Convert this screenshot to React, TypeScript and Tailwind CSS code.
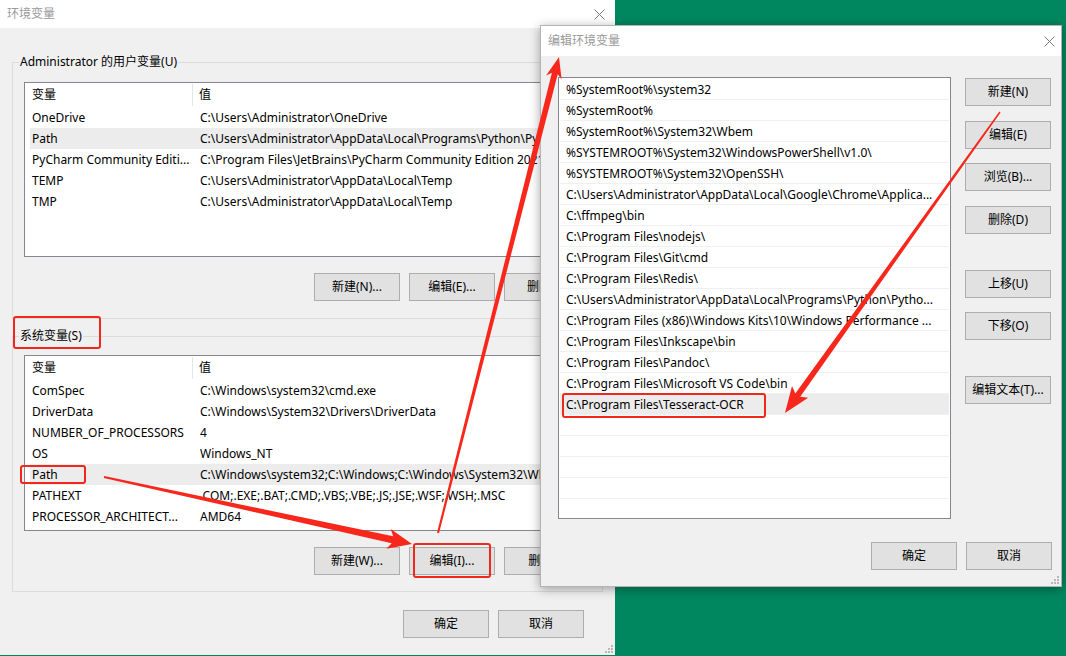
import React from "react";

// 用户变量 / 系统变量 rows
const userVars = [
  ["OneDrive", "C:\\Users\\Administrator\\OneDrive"],
  ["Path", "C:\\Users\\Administrator\\AppData\\Local\\Programs\\Python\\Python39\\"],
  ["PyCharm Community Editi...", "C:\\Program Files\\JetBrains\\PyCharm Community Edition 2021.1"],
  ["TEMP", "C:\\Users\\Administrator\\AppData\\Local\\Temp"],
  ["TMP", "C:\\Users\\Administrator\\AppData\\Local\\Temp"],
];

const sysVars = [
  ["ComSpec", "C:\\Windows\\system32\\cmd.exe"],
  ["DriverData", "C:\\Windows\\System32\\Drivers\\DriverData"],
  ["NUMBER_OF_PROCESSORS", "4"],
  ["OS", "Windows_NT"],
  ["Path", "C:\\Windows\\system32;C:\\Windows;C:\\Windows\\System32\\Wbem"],
  ["PATHEXT", ".COM;.EXE;.BAT;.CMD;.VBS;.VBE;.JS;.JSE;.WSF;.WSH;.MSC"],
  ["PROCESSOR_ARCHITECT...", "AMD64"],
];

const pathItems = [
  "%SystemRoot%\\system32",
  "%SystemRoot%",
  "%SystemRoot%\\System32\\Wbem",
  "%SYSTEMROOT%\\System32\\WindowsPowerShell\\v1.0\\",
  "%SYSTEMROOT%\\System32\\OpenSSH\\",
  "C:\\Users\\Administrator\\AppData\\Local\\Google\\Chrome\\Applica...",
  "C:\\ffmpeg\\bin",
  "C:\\Program Files\\nodejs\\",
  "C:\\Program Files\\Git\\cmd",
  "C:\\Program Files\\Redis\\",
  "C:\\Users\\Administrator\\AppData\\Local\\Programs\\Python\\Pytho...",
  "C:\\Program Files (x86)\\Windows Kits\\10\\Windows Performance ...",
  "C:\\Program Files\\Inkscape\\bin",
  "C:\\Program Files\\Pandoc\\",
  "C:\\Program Files\\Microsoft VS Code\\bin",
  "C:\\Program Files\\Tesseract-OCR",
  "",
  "",
  "",
  "",
  "",
];

function CloseX() {
  return (
    <svg width="11" height="11" viewBox="0 0 11 11">
      <path d="M0.5 0.5L10.5 10.5M10.5 0.5L0.5 10.5" stroke="#7a7a7a" strokeWidth="1" />
    </svg>
  );
}

function Grip() {
  return (
    <svg width="8" height="8" viewBox="0 0 8 8">
      <rect x="6" y="0" width="2" height="2" fill="#b8b8b8" />
      <rect x="3" y="3" width="2" height="2" fill="#b8b8b8" />
      <rect x="6" y="3" width="2" height="2" fill="#b8b8b8" />
      <rect x="0" y="6" width="2" height="2" fill="#b8b8b8" />
      <rect x="3" y="6" width="2" height="2" fill="#b8b8b8" />
      <rect x="6" y="6" width="2" height="2" fill="#b8b8b8" />
    </svg>
  );
}

function Btn({ children, className = "" }: { children: React.ReactNode; className?: string }) {
  return (
    <div
      className={`w-[86px] h-[28px] shrink-0 flex items-center justify-center bg-[#e1e1e1] border border-[#adadad] text-black whitespace-nowrap ${className}`}
    >
      {children}
    </div>
  );
}

function VarList({ rows, selected, className }: { rows: string[][]; selected: number; className: string }) {
  return (
    <div className={`bg-white border border-[#828790] overflow-hidden ${className}`}>
      <div className="flex h-[24px] items-center pl-[5px]">
        <div className="w-[163px] h-[22px] pl-[2px] flex items-center border-r border-[#e5e5e5]">变量</div>
        <div className="pl-[6px]">值</div>
      </div>
      {rows.map(([name, value], i) => (
        <div
          key={name}
          className={`flex h-[21px] items-center ml-[5px] whitespace-nowrap ${i === selected ? "bg-[#ececec]" : ""}`}
        >
          <div className="w-[163px] shrink-0 pl-[2px] overflow-hidden">{name}</div>
          <div className="pl-[7px]">{value}</div>
        </div>
      ))}
    </div>
  );
}

function GroupBox({
  label,
  rows,
  selected,
  listClass,
  buttons,
  className = "",
  innerClass,
}: {
  label: string;
  rows: string[][];
  selected: number;
  listClass: string;
  buttons: string[];
  className?: string;
  innerClass: string;
}) {
  return (
    <fieldset className={`w-[591px] min-w-0 border border-[#dcdcdc] p-0 m-0 ${className}`}>
      <legend className="ml-[6px] px-[1px] leading-[16px]">{label}</legend>
      <div className={`px-[11px] ${innerClass}`}>
        <VarList rows={rows} selected={selected} className={listClass} />
        <div className="flex justify-end gap-[9px] pr-[1px] mt-[16px]">
          {buttons.map((b) => (
            <Btn key={b}>{b}</Btn>
          ))}
        </div>
      </div>
    </fieldset>
  );
}

function arrow(x1: number, y1: number, x2: number, y2: number, w0: number, w1: number, hl: number, hw: number) {
  const dx = x2 - x1;
  const dy = y2 - y1;
  const len = Math.hypot(dx, dy);
  const ux = dx / len;
  const uy = dy / len;
  const nx = -uy;
  const ny = ux;
  const bx = x2 - ux * hl;
  const by = y2 - uy * hl;
  const notch = 4;
  const pts = [
    [x1 + (nx * w0) / 2, y1 + (ny * w0) / 2],
    [bx + (nx * w1) / 2, by + (ny * w1) / 2],
    [bx - ux * notch + nx * hw, by - uy * notch + ny * hw],
    [x2, y2],
    [bx - ux * notch - nx * hw, by - uy * notch - ny * hw],
    [bx - (nx * w1) / 2, by - (ny * w1) / 2],
    [x1 - (nx * w0) / 2, y1 - (ny * w0) / 2],
  ];
  return pts.map((p) => `${p[0].toFixed(1)},${p[1].toFixed(1)}`).join(" ");
}

export default function App() {
  return (
    <div className="relative w-[1066px] h-[656px] overflow-hidden bg-[#01875f] text-[12px] text-black font-['Segoe_UI','Noto_Sans','Noto_Sans_CJK_SC',sans-serif]">
      {/* 环境变量 */}
      <div className="relative w-[615px] h-[655px] bg-[#f0f0f0] flex flex-col">
        <div className="h-[28px] bg-white flex items-center justify-between pl-[7px] pr-[10px]">
          <span className="text-[#9a9a9a]">环境变量</span>
          <CloseX />
        </div>
        <div className="px-[12px] pt-[26px] flex flex-col">
          <GroupBox
            label="Administrator 的用户变量(U)"
            rows={userVars}
            selected={1}
            listClass="h-[175px]"
            buttons={["新建(N)...", "编辑(E)...", "删除(D)"]}
            innerClass="pt-[12px] pb-[17px]"
          />
          <GroupBox
            label="系统变量(S)"
            rows={sysVars}
            selected={4}
            listClass="h-[176px]"
            buttons={["新建(W)...", "编辑(I)...", "删除(L)"]}
            className="mt-[9px]"
            innerClass="pt-[11px] pb-[16px]"
          />
          <div className="flex justify-end gap-[9px] pr-[19px] mt-[18px]">
            <Btn>确定</Btn>
            <Btn>取消</Btn>
          </div>
        </div>
        <div className="absolute right-[2px] bottom-[2px]">
          <Grip />
        </div>
      </div>

      {/* 编辑环境变量 */}
      <div className="absolute left-[540px] top-[25px] w-[522px] h-[562px] bg-[#f0f0f0] border border-[#b4b4b4] shadow-[0_2px_10px_rgba(0,0,0,0.35)] flex flex-col">
        <div className="h-[30px] bg-white flex items-center justify-between pl-[7px] pr-[6px]">
          <span className="text-[#9a9a9a]">编辑环境变量</span>
          <CloseX />
        </div>
        <div className="flex pl-[17px] pt-[21px]">
          <div className="w-[393px] h-[442px] pt-[1px] bg-white border border-[#828790] overflow-hidden">
            {pathItems.map((p, i) => (
              <div
                key={i}
                className={`h-[21px] mx-[1px] border-b border-[#f0f0f0] flex items-center pl-[6px] pt-[1px] whitespace-nowrap ${i === 15 ? "bg-[#ececec]" : ""}`}
              >
                {p}
              </div>
            ))}
          </div>
          <div className="flex flex-col ml-[14px] pt-[1px]">
            <Btn>新建(N)</Btn>
            <Btn className="mt-[15px]">编辑(E)</Btn>
            <Btn className="mt-[14px]">浏览(B)...</Btn>
            <Btn className="mt-[15px]">删除(D)</Btn>
            <Btn className="mt-[36px]">上移(U)</Btn>
            <Btn className="mt-[14px]">下移(O)</Btn>
            <Btn className="mt-[36px]">编辑文本(T)...</Btn>
          </div>
        </div>
        <div className="flex justify-end gap-[9px] pr-[9px] mt-[23px]">
          <Btn>确定</Btn>
          <Btn>取消</Btn>
        </div>
        <div className="absolute right-[2px] bottom-[2px]">
          <Grip />
        </div>
      </div>

      {/* 标注 */}
      <svg className="absolute inset-0 pointer-events-none" width="1066" height="656" viewBox="0 0 1066 656">
        <g fill="none" stroke="#f0281c" strokeWidth="2">
          <rect x="14" y="317" width="86" height="31" rx="2" />
          <rect x="21" y="466" width="64" height="17" rx="2" />
          <rect x="414" y="544" width="76" height="33" rx="2" />
          <rect x="563" y="394" width="202" height="23" rx="2" />
        </g>
        <g fill="#f7271b">
          <polygon points={arrow(104, 477, 412, 544, 2, 7, 20, 10)} />
          <polygon points={arrow(438, 533, 559, 57, 2, 6, 17, 8)} />
          <polygon points={arrow(1000, 112, 785, 413, 1.5, 6, 22, 10)} />
        </g>
      </svg>
    </div>
  );
}
